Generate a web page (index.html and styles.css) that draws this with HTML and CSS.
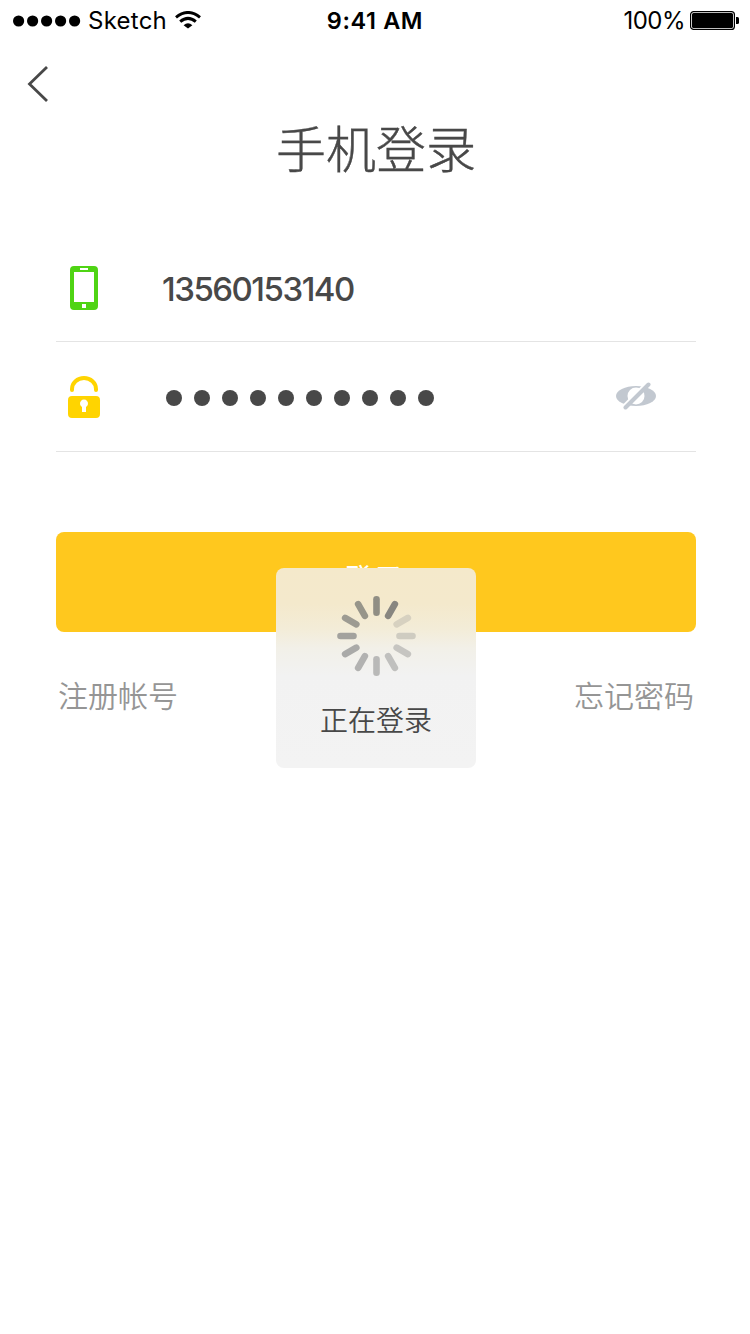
FILE: index.html
```html
<!DOCTYPE html>
<html lang="zh-CN">
<head>
<meta charset="utf-8">
<title>手机登录</title>
<link rel="stylesheet" href="styles.css">
</head>
<body>
<div class="screen">
  <header class="status">
    <div class="status-left">
      <svg class="signal" width="68" height="12" viewBox="0 0 68 12"><circle cx="5.6" cy="6" r="5.6"/><circle cx="19.6" cy="6" r="5.6"/><circle cx="33.6" cy="6" r="5.6"/><circle cx="47.6" cy="6" r="5.6"/><circle cx="61.6" cy="6" r="5.6"/></svg>
      <span class="carrier">Sketch</span>
      <svg class="wifi" width="26" height="18" viewBox="0 0 26 18"><g fill="none" stroke="#000" stroke-width="3"><path d="M1 6.3Q13 -3.3 25 6.3"/><path d="M5.2 10.7Q13 4 20.8 10.7"/></g><path d="M8.6 14.2Q13 10.2 17.4 14.2L13 17.6Z"/></svg>
    </div>
    <div class="clock">9:41 AM</div>
    <div class="status-right">
      <span class="percent">100%</span>
      <svg width="50" height="20" viewBox="0 0 50 20"><rect x=".6" y=".6" width="43.8" height="17.8" rx="3" fill="none" stroke="#000" stroke-width="1.2"/><rect x="2" y="2" width="41" height="15" rx="1.5"/><path d="M46 6h1.5q1.5 0 1.5 1.5v4q0 1.5-1.5 1.5H46z"/></svg>
    </div>
  </header>
  <nav class="nav">
    <svg width="24" height="38" viewBox="0 0 24 38"><path d="M21 2 3.5 19 21 36" fill="none" stroke="#484848" stroke-width="2.8"/></svg>
  </nav>
  <h1 class="title">手机登录</h1>
  <main class="form">
    <div class="field phone-field">
      <svg class="phone-icon" width="28" height="44" viewBox="0 0 28 44"><path fill="#4fd414" fill-rule="evenodd" d="M4 0h20a4 4 0 0 1 4 4v36a4 4 0 0 1-4 4H4a4 4 0 0 1-4-4V4a4 4 0 0 1 4-4zM4 6v30h20V6zM10 2v2h8V2zM12 38v4h4v-4z"/></svg>
      <span class="number">13560153140</span>
    </div>
    <div class="field password-field">
      <svg class="lock-icon" width="32" height="42" viewBox="0 0 32 42"><path d="M4 14v-1a12 11 0 0 1 24 0v1" fill="none" stroke="#ffd400" stroke-width="4" stroke-linecap="round"/><path fill="#ffd400" fill-rule="evenodd" d="M4 20h24a4 4 0 0 1 4 4v14a4 4 0 0 1-4 4H4a4 4 0 0 1-4-4V24a4 4 0 0 1 4-4zM14 31v5h4v-5a4 4 0 1 0-4 0z"/></svg>
      <div class="dots"><i></i><i></i><i></i><i></i><i></i><i></i><i></i><i></i><i></i><i></i></div>
      <svg class="eye" width="42" height="28" viewBox="0 0 42 28"><ellipse cx="20" cy="14" rx="20" ry="10" fill="#c2c8d0"/><circle cx="20" cy="14" r="8.5" fill="#fff"/><path d="M8.5 24.5 31.5 1.5" stroke="#fff" stroke-width="5"/><path d="M9.5 25.5 32.5 2.5" stroke="#c2c8d0" stroke-width="4" stroke-linecap="round"/></svg>
    </div>
    <div class="button">登录</div>
    <div class="links"><span>注册帐号</span><span>忘记密码</span></div>
  </main>
  <div class="toast">
    <svg width="80" height="80" viewBox="-40.5 -40 80 80">
      <g stroke-width="6.6" stroke-linecap="round">
        <path d="M0-23.3V-36.7" stroke="#908e84"/>
        <path d="M0-23.3V-36.7" stroke="#888680" transform="rotate(30)"/>
        <path d="M0-23.3V-36.2" stroke="#d7d1c0" transform="rotate(60)"/>
        <path d="M0-23V-36" stroke="#cfccc1" transform="rotate(90)"/>
        <path d="M0-23.3V-36.2" stroke="#c6c5c1" transform="rotate(120)"/>
        <path d="M0-23.3V-36.7" stroke="#c0c0be" transform="rotate(150)"/>
        <path d="M0-23.3V-36.7" stroke="#b9b9b8" transform="rotate(180)"/>
        <path d="M0-23.3V-36.7" stroke="#b2b2b1" transform="rotate(210)"/>
        <path d="M0-23.3V-36.2" stroke="#aaaaa8" transform="rotate(240)"/>
        <path d="M0-23V-36" stroke="#a3a29e" transform="rotate(270)"/>
        <path d="M0-23.3V-36.2" stroke="#9d9b92" transform="rotate(300)"/>
        <path d="M0-23.3V-36.7" stroke="#97958a" transform="rotate(330)"/>
      </g>
    </svg>
    <span>正在登录</span>
  </div>
</div>
</body>
</html>
```
FILE: styles.css
```css
* { box-sizing: border-box; }
body { margin: 0; background: #fff; color: #484848; font-family: Inter, "Noto Sans CJK SC", sans-serif; }
.screen { position: relative; width: 750px; height: 1334px; overflow: hidden; }
svg { display: block; flex: none; }
.status { display: grid; grid-template-columns: 1fr auto 1fr; height: 40px; align-items: center; padding: 1px 10px 0 13px; color: #000; font-size: 24px; line-height: 40px; white-space: nowrap; }
.status-left, .status-right { display: flex; align-items: center; }
.status-left .signal { margin-top: -1px; }
.status-right { justify-content: flex-end; }
.carrier { margin-left: 7px; letter-spacing: .25px; }
.wifi { margin: -2px 0 0 8px; }
.clock { font-weight: 600; font-size: 23.5px; letter-spacing: .6px; margin-right: 3px; }
.percent { margin-right: 5px; letter-spacing: -.5px; }
.nav { height: 74px; padding: 25px 0 0 26px; }
.title { height: 70px; margin: 0; padding-left: 2px; font-family: "Noto Sans CJK SC", sans-serif; font-size: 50px; font-weight: 300; -webkit-text-stroke: .4px #484848; line-height: 64px; text-align: center; }
.form { padding: 50px 54px 0 56px; }
.field { display: flex; height: 108px; align-items: center; border-bottom: 1px solid #e4e4e4; }
.phone-field { padding: 0 0 0 14px; }
.number { margin-left: 64px; font-size: 33px; font-weight: 450; letter-spacing: -1.5px; padding-top: 2px; }
.password-field { height: 110px; padding: 0 38px 0 12px; }
.dots { display: flex; gap: 12px; margin: 2px 0 0 66px; }
.dots i { width: 16px; height: 16px; border-radius: 50%; background: #484848; }
.eye { margin: 0 0 2px auto; }
.button { height: 100px; margin-top: 80px; border-radius: 8px; background: #ffc81e; color: #fff; font-size: 30px; line-height: 95px; text-align: center; padding-right: 4px; }
.links { display: flex; justify-content: space-between; margin-top: 40px; padding: 0 2px; color: #959595; font-family: "Noto Sans CJK SC DemiLight", "Noto Sans CJK SC", sans-serif; font-size: 30px; font-weight: 350; line-height: 44px; }
.toast { position: absolute; left: 276px; top: 568px; width: 200px; height: 200px; padding-top: 28px; display: flex; flex-direction: column; align-items: center; border-radius: 8px; background: linear-gradient(#f4e9cb 0%, #f4e9cc 18%, #f3ecd7 30%, #f2f0e8 40%, #f2f2f2 54%, #f3f3f3 100%); font-size: 28px; }
.toast span { margin-top: 23px; line-height: 40px; font-family: "Noto Sans CJK SC DemiLight", "Noto Sans CJK SC", sans-serif; font-weight: 350; }
```
